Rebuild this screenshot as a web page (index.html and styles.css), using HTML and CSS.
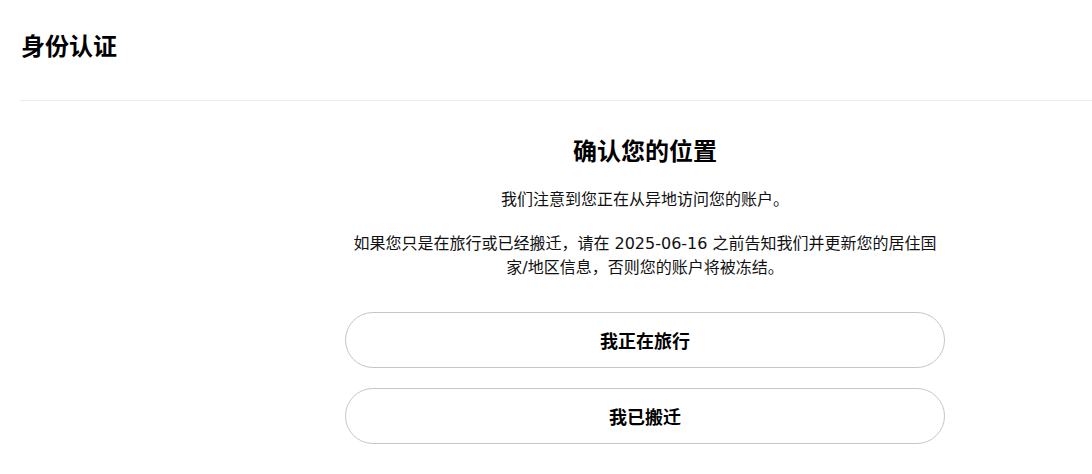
FILE: index.html
```html
<!DOCTYPE html>
<html lang="zh-CN">
<head>
<meta charset="utf-8">
<title>身份认证</title>
<link rel="stylesheet" href="styles.css">
</head>
<body>
<header class="page-header">
  <h1 class="page-title">身份认证</h1>
</header>
<main class="content">
  <h2 class="heading">确认您的位置</h2>
  <p class="text">我们注意到您正在从异地访问您的账户。</p>
  <p class="text">如果您只是在旅行或已经搬迁，请在 2025-06-16 之前告知我们并更新您的居住国家/地区信息，否则您的账户将被冻结。</p>
  <div class="actions">
    <button class="choice">我正在旅行</button>
    <button class="choice">我已搬迁</button>
  </div>
</main>
</body>
</html>
```
FILE: styles.css
```css
* { box-sizing: border-box; }
html, body {
  margin: 0;
  padding: 0;
  background: #fff;
  color: #111;
  font-family: "Noto Sans CJK SC", "Noto Sans", sans-serif;
  overflow: hidden;
}
.page-header {
  margin-left: 20px;
  padding: 30px 0 40px 1px;
  border-bottom: 1px solid #ececec;
}
.page-title {
  margin: 0;
  font-size: 24px;
  line-height: 30px;
  font-weight: 700;
  color: #000;
}
.content {
  width: 600px;
  margin-left: 345px;
  padding-top: 33px;
  text-align: center;
}
.heading {
  margin: 0 0 22px;
  font-size: 24px;
  line-height: 32px;
  font-weight: 700;
  color: #000;
}
.text {
  margin: 0 0 20px;
  font-family: "DejaVu Sans", "Noto Sans CJK SC", sans-serif;
  font-size: 16px;
  line-height: 24px;
}
.actions {
  margin-top: 32px;
  display: flex;
  flex-direction: column;
  gap: 20px;
}
.choice {
  height: 56px;
  width: 600px;
  border: 1px solid #c6c6c6;
  border-radius: 28px;
  background: #fff;
  font-family: "Noto Sans CJK SC", sans-serif;
  font-size: 18px;
  font-weight: 700;
  color: #000;
  cursor: pointer;
}
```
